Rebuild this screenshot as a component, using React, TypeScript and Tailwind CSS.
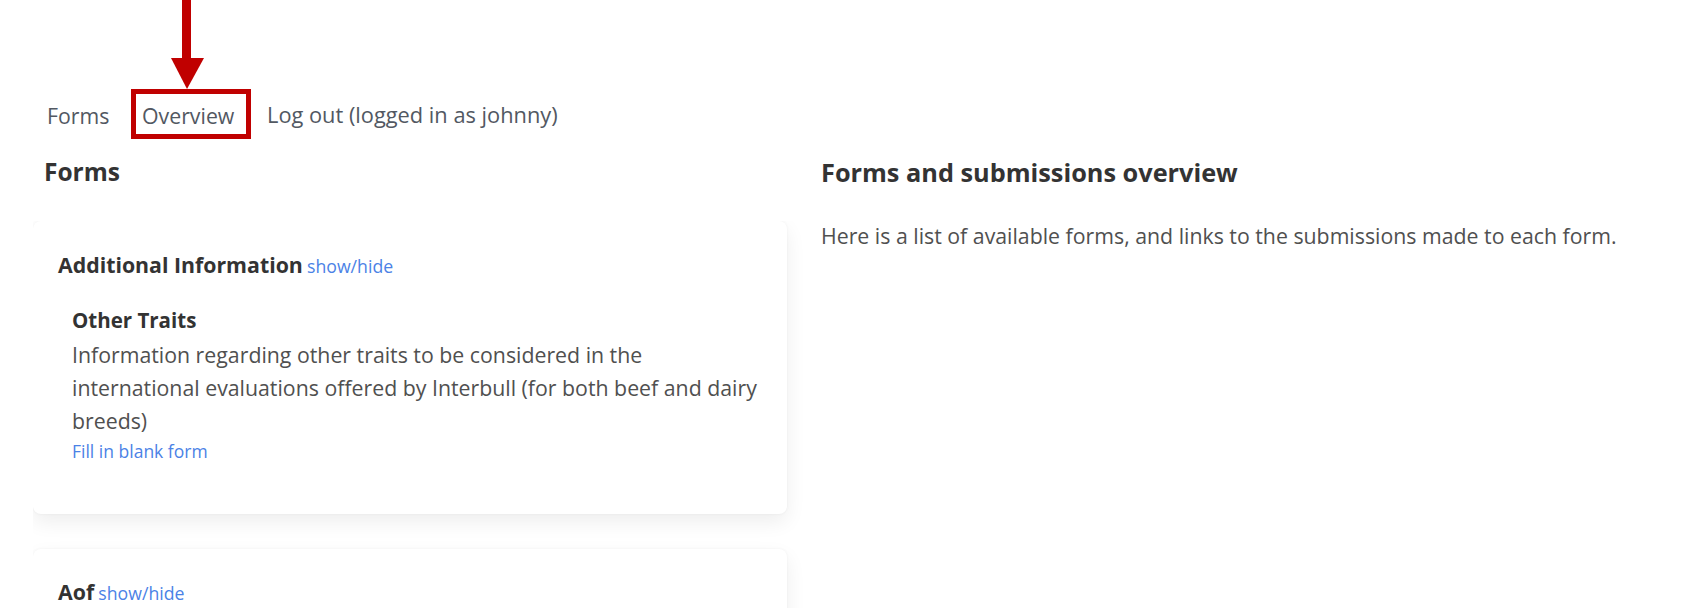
import React from "react";

export default function App() {
  return (
    <div className="relative w-[1706px] h-[608px] overflow-hidden bg-white font-['Open_Sans',sans-serif]">
      {/* annotation arrow */}
      <svg className="absolute left-[160px] top-0" width="60" height="92" viewBox="160 0 60 92">
        <rect x="182" y="0" width="9" height="60" fill="#c00000" />
        <polygon points="171,58 204,58 187,89" fill="#c00000" />
      </svg>

      <nav className="flex items-center h-[50px] mt-[89px] pl-[47px] text-[21.3px] text-[#525862]">
        <span className="w-[84px] pt-[3px]">Forms</span>
        <span className="w-[120px] h-[50px] border-[5px] border-[#c00000] flex items-center pl-[6px] pt-[3px] box-border whitespace-nowrap">
          Overview
        </span>
        <span className="ml-[16px] pt-[3px] text-[21.8px]">Log out (logged in as johnny)</span>
      </nav>

      <div className="flex pl-[33px]">
        <div className="w-[788px] shrink-0">
          <h2 className="mt-[17px] pl-[11px] h-[32px] leading-[32px] text-[24.5px] font-bold text-[#333333]">Forms</h2>
          <div className="overflow-hidden pr-[30px] pb-[30px] mt-[33px] -mb-[30px]">
            <div className="w-[754px] h-[293px] rounded-[8px] bg-white shadow-[0_8px_20px_rgba(0,0,0,0.07),0_0_3px_rgba(0,0,0,0.05)] pt-[30px] pl-[25px] box-border">
              <div className="h-[28px] leading-[28px]">
                <span className="text-[21.3px] font-bold text-[#333333]">Additional Information</span>{" "}
                <span className="text-[17.7px] text-[#4b82e6]">show/hide</span>
              </div>
              <div className="pl-[14px] mt-[27px]">
                <div className="h-[28px] leading-[28px] text-[20.5px] font-bold text-[#333333]">Other Traits</div>
                <p className="mt-[4px] w-[692px] leading-[33px] text-[21.3px] text-[#505050]">
                  Information regarding other traits to be considered in the international evaluations offered by Interbull (for both beef and dairy breeds)
                </p>
                <div className="mt-[2px] h-[24px] leading-[24px] text-[17.5px] text-[#4b82e6]">Fill in blank form</div>
              </div>
            </div>
            <div className="mt-[35px] w-[754px] h-[120px] rounded-[8px] bg-white shadow-[0_8px_20px_rgba(0,0,0,0.07),0_0_3px_rgba(0,0,0,0.05)] pt-[29px] pl-[25px] box-border">
              <div className="h-[28px] leading-[28px]">
                <span className="text-[21.3px] font-bold text-[#333333]">Aof</span>{" "}
                <span className="text-[17.7px] text-[#4b82e6]">show/hide</span>
              </div>
            </div>
          </div>
        </div>
        <div>
          <h2 className="mt-[17px] h-[32px] leading-[32px] text-[25.3px] font-bold text-[#333333]">Forms and submissions overview</h2>
          <p className="mt-[34px] leading-[28px] text-[21.3px] text-[#505050]">
            Here is a list of available forms, and links to the submissions made to each form.
          </p>
        </div>
      </div>
    </div>
  );
}
